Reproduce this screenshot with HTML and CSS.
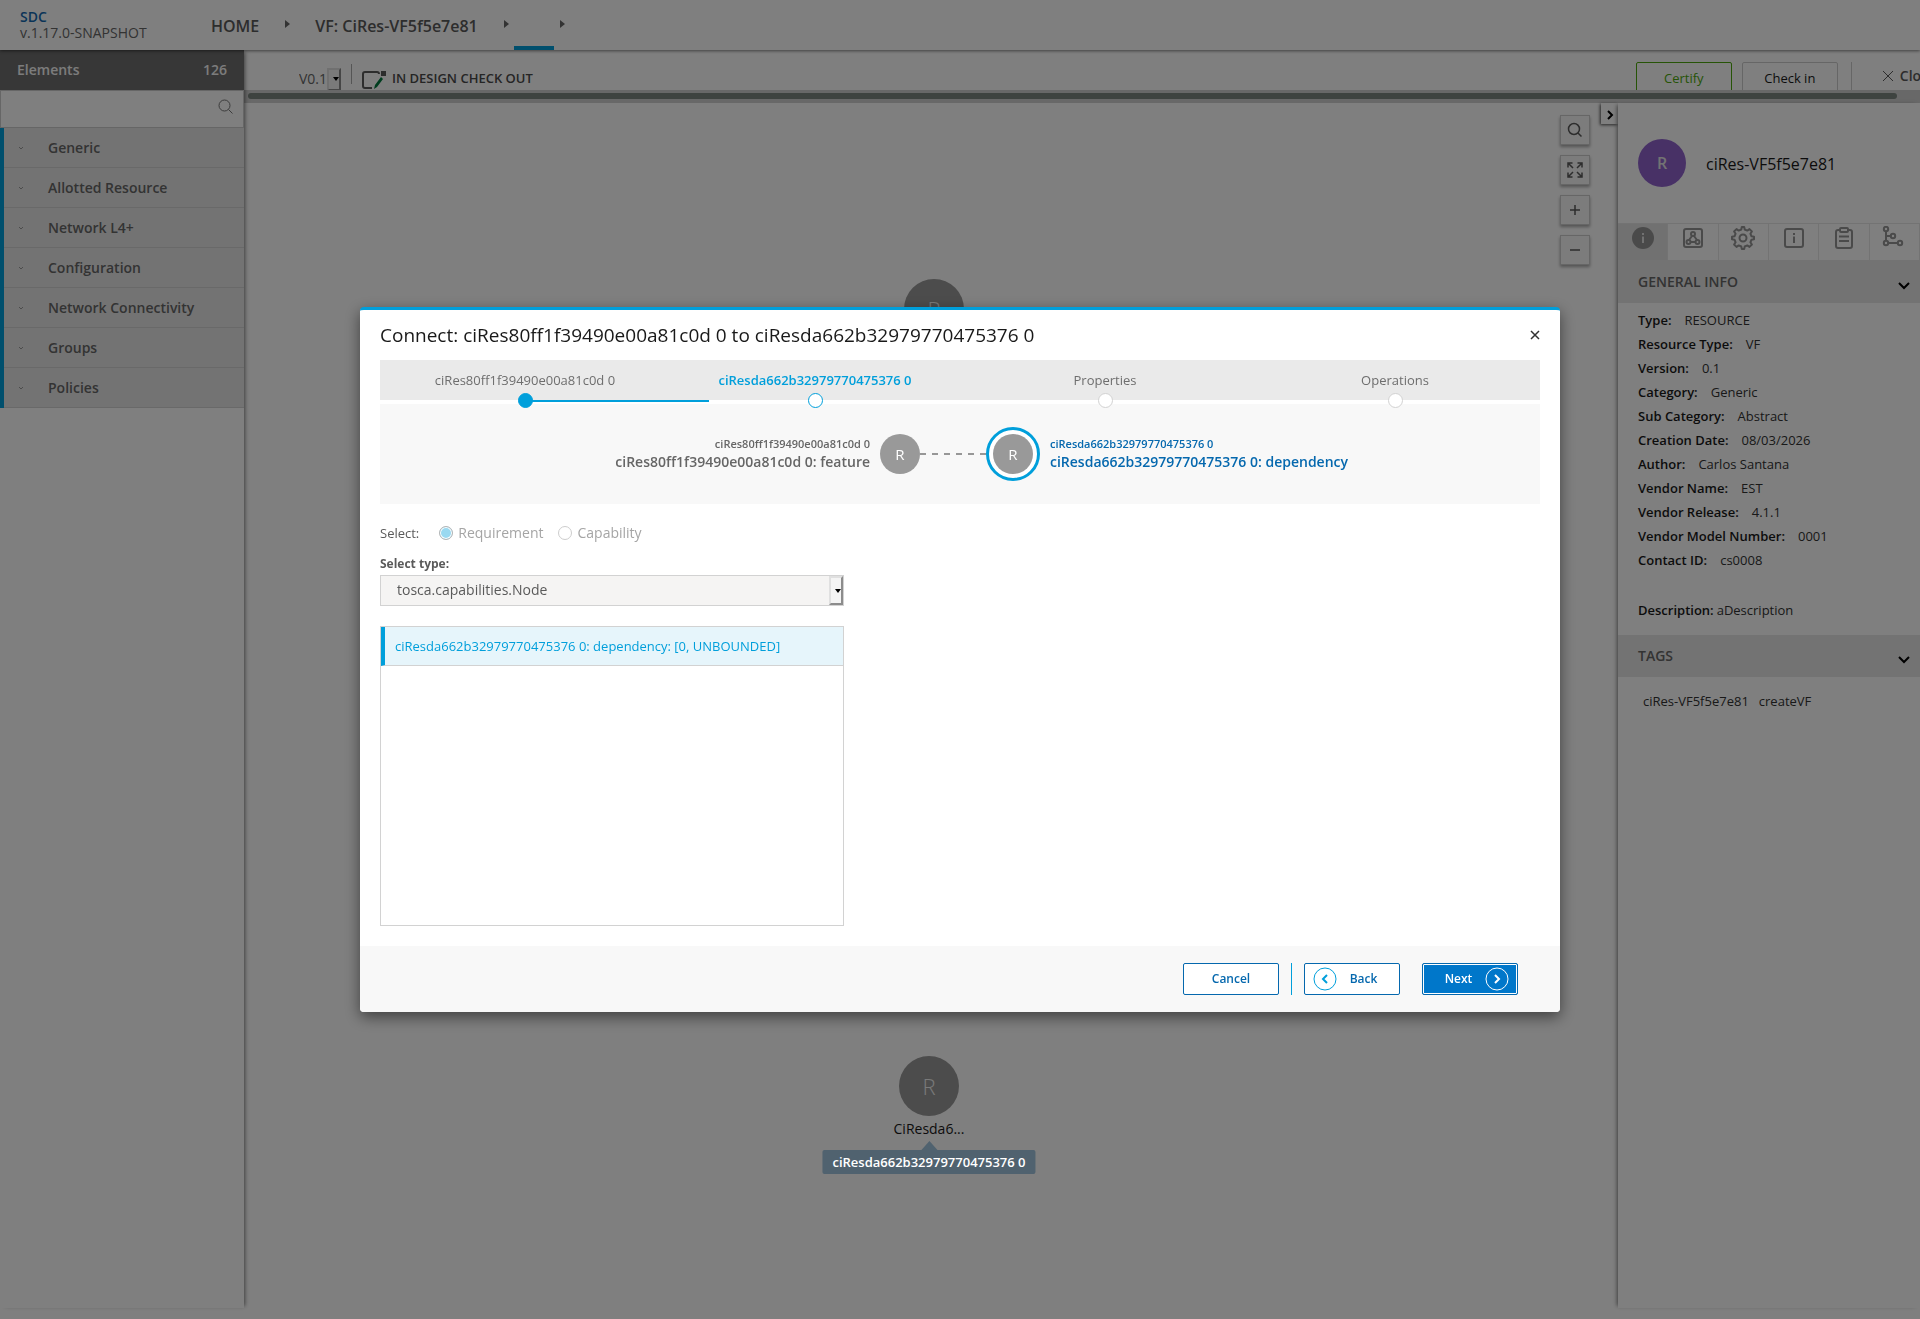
FILE: index.html
```
<!DOCTYPE html>
<html lang="en">
<head>
    <meta charset="utf-8">
    <title>SDC - Composition</title>
    <link rel="stylesheet" href="styles.css">
</head>
<body>

<!-- top navigation -->
<header class="top-nav">
    <div class="logo">
        <a href="#" class="logo-name">SDC</a>
        <span class="logo-version">v.1.17.0-SNAPSHOT</span>
    </div>
    <nav class="breadcrumbs">
        <a href="#">HOME</a>
        <i class="crumb-arrow"></i>
        <a href="#">VF: CiRes-VF5f5e7e81</a>
        <i class="crumb-arrow"></i>
        <a href="#" class="selected" aria-label="Composition"></a>
        <i class="crumb-arrow"></i>
    </nav>
</header>

<div class="workspace">
    <!-- palette -->
    <aside class="palette">
        <div class="palette-title"><span>Elements</span><span>126</span></div>
        <div class="palette-search">
            <input type="text" aria-label="Search elements">
            <svg width="16" height="16" viewBox="0 0 16 16"><circle cx="6.5" cy="6.5" r="5.5"/><path d="M10.5 10.5l4 4"/></svg>
        </div>
        <div class="palette-list">
            <button type="button"><svg width="6" height="4" viewBox="0 0 6 4"><path d="M1 1l2 2 2-2"/></svg>Generic</button>
            <button type="button"><svg width="6" height="4" viewBox="0 0 6 4"><path d="M1 1l2 2 2-2"/></svg>Allotted Resource</button>
            <button type="button"><svg width="6" height="4" viewBox="0 0 6 4"><path d="M1 1l2 2 2-2"/></svg>Network L4+</button>
            <button type="button"><svg width="6" height="4" viewBox="0 0 6 4"><path d="M1 1l2 2 2-2"/></svg>Configuration</button>
            <button type="button"><svg width="6" height="4" viewBox="0 0 6 4"><path d="M1 1l2 2 2-2"/></svg>Network Connectivity</button>
            <button type="button"><svg width="6" height="4" viewBox="0 0 6 4"><path d="M1 1l2 2 2-2"/></svg>Groups</button>
            <button type="button"><svg width="6" height="4" viewBox="0 0 6 4"><path d="M1 1l2 2 2-2"/></svg>Policies</button>
        </div>
    </aside>

    <main class="main">
        <div class="toolbar">
            <div class="toolbar-inner">
                <span class="select-box version">
                    <select aria-label="Version"><option>V0.1</option></select>
                </span>
                <span class="separator"></span>
                <svg class="status-icon" width="24" height="18" viewBox="0 0 24 18">
                    <path d="M17 3V3a2 2 0 0 0-2-2H3a2 2 0 0 0-2 2v12a2 2 0 0 0 2 2h7" fill="none" stroke="#5a5a5a" stroke-width="2"/>
                    <path d="M19 0h5v5h-5z" fill="#5a5a5a"/>
                    <path d="M12 18l1-4 6-8 2 2-6 8z" fill="#007a3e"/>
                </svg>
                <span class="status">IN DESIGN CHECK OUT</span>
                <div class="toolbar-actions">
                    <button type="button" class="tb-btn certify">Certify</button>
                    <button type="button" class="tb-btn">Check in</button>
                    <span class="separator"></span>
                    <a href="#" class="close-link">
                        <svg width="12" height="12" viewBox="0 0 12 12"><path d="M1 1l10 10M11 1L1 11"/></svg>Close
                    </a>
                </div>
            </div>
        </div>
        <div class="scrollbar"><div class="thumb"></div></div>

        <div class="composition">
            <div class="canvas">
                <div class="node node-source"><span class="circle">R</span></div>
                <div class="node node-target"><span class="circle">R</span><span class="label">CiResda6...</span></div>
                <div class="tooltip">ciResda662b32979770475376 0</div>

                <div class="canvas-tools">
                    <button type="button" aria-label="Search"><svg width="16" height="16" viewBox="0 0 16 16"><circle cx="7" cy="7" r="5.5"/><path d="M11 11l3.500 3.500"/></svg></button>
                    <button type="button" aria-label="Fit"><svg width="16" height="16" viewBox="0 0 16 16"><path d="M1 5.500V1h4.500M10.500 1H15v4.500M15 10.500V15h-4.500M5.500 15H1v-4.500M1.500 1.500L6 6M14.500 1.500L10 6M14.500 14.500L10 10M1.500 14.500L6 10"/></svg></button>
                    <button type="button" aria-label="Zoom in"><svg width="16" height="16" viewBox="0 0 16 16"><path d="M3 8h10M8 3v10"/></svg></button>
                    <button type="button" aria-label="Zoom out"><svg width="16" height="16" viewBox="0 0 16 16"><path d="M3 8h10"/></svg></button>
                </div>
                <button type="button" class="collapse" aria-label="Collapse"><svg width="8" height="12" viewBox="0 0 8 12"><path d="M2 2l4 4-4 4"/></svg></button>
            </div>

            <aside class="details">
                <div class="details-head">
                    <span class="avatar">R</span>
                    <span class="details-name">ciRes-VF5f5e7e81</span>
                </div>
                <div class="tabs">
                    <button type="button" class="active" aria-label="General info">
                        <svg width="24" height="24" viewBox="0 0 24 24"><circle cx="12" cy="12" r="11" fill="#959595" stroke="none"/><path d="M12 10.500V17M12 7v2" stroke="#e2e2e2" stroke-width="2"/></svg>
                    </button>
                    <button type="button" aria-label="Composition">
                        <svg width="24" height="24" viewBox="0 0 24 24"><rect x="3" y="3" width="18" height="18" rx="2"/><circle cx="12" cy="8" r="2"/><circle cx="7.500" cy="16" r="2"/><circle cx="16.500" cy="16" r="2"/><path d="M11 10l-3 4M13 10l3 4M9.500 16h5"/></svg>
                    </button>
                    <button type="button" aria-label="Settings">
                        <svg width="24" height="24" viewBox="0 0 24 24"><circle cx="12" cy="12" r="3.500"/><path d="M10.300 3.500L10.800 1h2.400l.5 2.500 2.600 1.100 2.200-1.500 2.400 2.400-1.500 2.200 1.100 2.600 2.500.5v2.400l-2.500.5-1.100 2.600 1.500 2.200-2.400 2.400-2.200-1.500-2.600 1.100-.5 2.500h-2.400l-.5-2.500-2.600-1.100-2.200 1.500-2.400-2.400 1.500-2.200-1.100-2.600L1 13.200v-2.400l2.500-.5 1.100-2.600-1.500-2.200 2.400-2.400 2.200 1.500z" stroke-linejoin="round"/></svg>
                    </button>
                    <button type="button" aria-label="Information">
                        <svg width="24" height="24" viewBox="0 0 24 24"><rect x="3" y="3" width="18" height="18" rx="2"/><path d="M12 10.500V17M12 7v2"/></svg>
                    </button>
                    <button type="button" aria-label="Requirements">
                        <svg width="24" height="24" viewBox="0 0 24 24"><path d="M8 4H6a2 2 0 0 0-2 2v14a2 2 0 0 0 2 2h12a2 2 0 0 0 2-2V6a2 2 0 0 0-2-2h-2"/><rect x="8" y="2" width="8" height="4" rx="1"/><path d="M7 10.500h10M7 15h10"/></svg>
                    </button>
                    <button type="button" aria-label="Relations">
                        <svg width="24" height="24" viewBox="0 0 24 24"><circle cx="4" cy="3" r="2.200"/><circle cx="4" cy="17" r="2.200"/><circle cx="11" cy="10" r="2.200"/><circle cx="18" cy="17" r="2.200"/><path d="M4 5v10M6 17h10M4 10h5"/></svg>
                    </button>
                </div>

                <h3 class="section-title">GENERAL INFO <svg width="12" height="8" viewBox="0 0 12 8"><path d="M1 1l5 5 5-5"/></svg></h3>
                <dl class="info">
                    <div><dt>Type:</dt><dd>RESOURCE</dd></div>
                    <div><dt>Resource Type:</dt><dd>VF</dd></div>
                    <div><dt>Version:</dt><dd>0.1</dd></div>
                    <div><dt>Category:</dt><dd>Generic</dd></div>
                    <div><dt>Sub Category:</dt><dd>Abstract</dd></div>
                    <div><dt>Creation Date:</dt><dd>08/03/2026</dd></div>
                    <div><dt>Author:</dt><dd>Carlos Santana</dd></div>
                    <div><dt>Vendor Name:</dt><dd>EST</dd></div>
                    <div><dt>Vendor Release:</dt><dd>4.1.1</dd></div>
                    <div><dt>Vendor Model Number:</dt><dd>0001</dd></div>
                    <div><dt>Contact ID:</dt><dd>cs0008</dd></div>
                    <div class="description"><dt>Description:</dt><dd>aDescription</dd></div>
                </dl>

                <h3 class="section-title">TAGS <svg width="12" height="8" viewBox="0 0 12 8"><path d="M1 1l5 5 5-5"/></svg></h3>
                <div class="tags"><span>ciRes-VF5f5e7e81</span><span>createVF</span></div>
            </aside>
        </div>
    </main>
</div>

<!-- connection wizard -->
<div class="overlay">
    <div class="modal" role="dialog" aria-labelledby="modal-title">
        <div class="modal-head">
            <h2 id="modal-title">Connect: ciRes80ff1f39490e00a81c0d 0 to ciResda662b32979770475376 0</h2>
            <button type="button" class="modal-close" aria-label="Close"><svg width="10" height="10" viewBox="0 0 10 10"><path d="M1 1l8 8M9 1L1 9"/></svg></button>
        </div>

        <div class="modal-body">
            <ol class="steps">
                <li class="done">ciRes80ff1f39490e00a81c0d 0</li>
                <li class="current">ciResda662b32979770475376 0</li>
                <li>Properties</li>
                <li>Operations</li>
            </ol>

            <div class="connection">
                <div class="side from">
                    <span class="side-name">ciRes80ff1f39490e00a81c0d 0</span>
                    <span class="side-cap">ciRes80ff1f39490e00a81c0d 0: feature</span>
                </div>
                <div class="link">
                    <span class="res">R</span>
                    <span class="dash"></span>
                    <span class="ring"><span class="res">R</span></span>
                </div>
                <div class="side to">
                    <span class="side-name">ciResda662b32979770475376 0</span>
                    <span class="side-cap">ciResda662b32979770475376 0: dependency</span>
                </div>
            </div>

            <div class="radios">
                <span class="radios-label">Select:</span>
                <label><input type="radio" name="kind" checked disabled>Requirement</label>
                <label><input type="radio" name="kind" disabled>Capability</label>
            </div>

            <div class="type-column">
                <label class="type-label" for="type">Select type:</label>
                <span class="select-box type">
                    <select id="type"><option>tosca.capabilities.Node</option></select>
                </span>
                <ul class="req-list">
                    <li class="selected">ciResda662b32979770475376 0: dependency: [0, UNBOUNDED]</li>
                </ul>
            </div>
        </div>

        <div class="modal-foot">
            <button type="button" class="btn">Cancel</button>
            <span class="foot-separator"></span>
            <button type="button" class="btn back"><svg width="24" height="24" viewBox="0 0 24 24"><circle cx="12" cy="12" r="11"/><path d="M14 8l-4 4 4 4" stroke-width="2"/></svg>Back</button>
            <button type="button" class="btn next">Next<svg width="24" height="24" viewBox="0 0 24 24"><circle cx="12" cy="12" r="11"/><path d="M10 8l4 4-4 4" stroke-width="2"/></svg></button>
        </div>
    </div>
</div>

</body>
</html>
```
FILE: styles.css
```
* { box-sizing: border-box; }
body {
    margin: 0;
    height: 100vh;
    display: flex;
    flex-direction: column;
    overflow: hidden;
    background: #fff;
    color: #191919;
    font: 13px/18px "Open Sans", sans-serif;
}
a { color: inherit; text-decoration: none; }
button, select, input { font: inherit; color: inherit; }
button { padding: 0; cursor: pointer; }
svg { fill: none; stroke: currentColor; flex: none; }
h2, h3, ol, ul, dl, dd { margin: 0; padding: 0; list-style: none; }

/* top navigation */
.top-nav {
    position: relative;
    z-index: 2;
    display: flex;
    height: 50px;
    flex: none;
    background: #fff;
    box-shadow: 0 1px 3px rgba(0,0,0,.5);
}
.logo {
    width: 211px;
    padding: 9px 0 0 20px;
    display: flex;
    flex-direction: column;
    font-size: 14px;
    line-height: 16px;
    color: #666;
}
.logo-name { color: #1469b0; font-weight: 600; }
.breadcrumbs { display: flex; align-items: center; font-size: 16px; font-weight: 600; color: #5a5a5a; }
.breadcrumbs a { padding-top: 2px; }
.crumb-arrow {
    margin: 0 25px 3px 26px;
    border: solid transparent;
    border-width: 4px 0 4px 5px;
    border-left-color: #666;
}
.breadcrumbs .selected { width: 40px; height: 50px; border-bottom: 4px solid #009fdb; margin: 0 -20px; }

.workspace { display: flex; flex: 1; min-height: 0; }

/* palette */
.palette { width: 244px; flex: none; margin-bottom: 11px; box-shadow: 3px 0 4px -2px rgba(0,0,0,.5); position: relative; z-index: 1; }
.palette-title {
    display: flex;
    justify-content: space-between;
    align-items: center;
    height: 40px;
    padding: 0 17px;
    background: #6e6e6e;
    color: #f8f8f8;
    font-size: 14px;
    font-weight: 600;
}
.palette-search { position: relative; height: 38px; }
.palette-search input { width: 100%; height: 100%; padding: 0 35px 0 10px; border: 1px solid #cdcdcd; background: #fff; }
.palette-search svg { position: absolute; right: 10px; top: 9px; color: #777; }
.palette-list { border-left: 4px solid #009fdb; }
.palette-list button {
    display: flex;
    align-items: center;
    gap: 24px;
    width: 100%;
    height: 40px;
    padding-left: 14px;
    border: 0;
    border-bottom: 1px solid #d2d2d2;
    background: #e6e6e6;
    color: #666;
    font-size: 14px;
    font-weight: 600;
}
.palette-list svg { color: #999; }

/* toolbar */
.main { flex: 1; min-width: 0; display: flex; flex-direction: column; }
.toolbar { height: 40px; overflow: hidden; }
.toolbar-inner { display: flex; align-items: flex-start; width: calc(100% + 16px); padding: 13px 0 0 55px; }
.select-box { position: relative; display: inline-block; }
.select-box select { appearance: none; width: 100%; height: 100%; border: 0; background: none; outline: 0; }
/* narrow outset drop-down handle */
.select-box::before {
    content: "";
    position: absolute;
    right: 0;
    top: 0;
    bottom: 0;
    width: 10px;
    border: 2px outset #e0e0e0;
    border-left-color: #e0e0e0;
    border-top-color: #e0e0e0;
    background: #f4f4f4;
    pointer-events: none;
}
.select-box::after {
    content: "";
    position: absolute;
    right: 2px;
    top: 50%;
    margin-top: -2px;
    border: solid transparent;
    border-width: 4px 3px 0;
    border-top-color: #000;
    pointer-events: none;
}
.version { width: 42px; height: 30px; margin-top: 1px; color: #666; font-size: 14px; }
.version::before { top: 4px; bottom: 3px; }
.version select { padding: 0; }
.separator { width: 1px; height: 20px; background: #aaa; }
.version + .separator { margin: 1px 10px 0; }
.status-icon { margin-top: 8px; stroke: none; }
.status { margin: 6px 0 0 6px; font-weight: 600; color: #4a4a4a; }
.toolbar-actions { display: flex; margin-left: auto; gap: 10px; }
.tb-btn {
    width: 96px;
    height: 32px;
    margin-top: -1px;
    border: 1px solid #cdcdcd;
    border-radius: 2px;
    background: #fff;
    color: #191919;
    font-weight: 500;
}
.certify { border-color: #4ca90c; color: #4ca90c; }
.toolbar-actions .separator { margin: -1px 20px 0 3px; height: 32px; background: #cdcdcd; }
.close-link { display: flex; align-items: center; gap: 6px; height: 26px; color: #5a5a5a; font-size: 14px; font-weight: 600; }
.scrollbar { height: 13px; padding: 3px 23px 4px 4px; background: #d0d0d0; flex: none; }
.thumb { height: 6px; border-radius: 3px; background: #7c8680; }

/* canvas */
.composition { flex: 1; display: flex; min-height: 0; }
.canvas { flex: 1; position: relative; background: #fff; }
.node { position: absolute; display: flex; flex-direction: column; align-items: center; width: 80px; transform: translateX(-50%); }
.node-source { left: 690px; top: 176px; }
.node-target { left: 685px; top: 953px; }
.circle {
    display: flex;
    align-items: center;
    justify-content: center;
    width: 60px;
    height: 60px;
    border-radius: 50%;
    background: #999;
    color: #f4f4f4;
    font-size: 22px;
    font-weight: 300;
}
.label { margin-top: 4px; font-size: 14px; }
.tooltip {
    position: absolute;
    z-index: 20;
    left: 685px;
    top: 1047px;
    transform: translateX(-50%);
    padding: 3px 10px;
    border-radius: 2px;
    background: #50626f;
    color: #fff;
    font-weight: 600;
    white-space: nowrap;
}
.tooltip::before {
    content: "";
    position: absolute;
    left: 50%;
    bottom: 100%;
    margin-left: -8px;
    border: solid transparent;
    border-width: 0 8px 9px;
    border-bottom-color: #50626f;
}
.canvas-tools { position: absolute; right: 28px; top: 12px; display: flex; flex-direction: column; gap: 10px; }
.canvas-tools button {
    display: flex;
    align-items: center;
    justify-content: center;
    width: 30px;
    height: 30px;
    border: 1px solid #cdcdcd;
    background: #f8f8f8;
    color: #5a5a5a;
    box-shadow: 0 2px 3px rgba(0,0,0,.35);
}
.canvas-tools svg { stroke-width: 1.5; }
.collapse {
    position: absolute;
    right: 0;
    top: 0;
    width: 17px;
    height: 21px;
    border: 0;
    background: #fff;
    box-shadow: -1px 1px 3px rgba(0,0,0,.7);
}
.collapse svg { stroke: #000; stroke-width: 2; vertical-align: middle; }

/* details panel */
.details { width: 302px; flex: none; margin-bottom: 11px; background: #fff; box-shadow: -3px 0 4px -2px rgba(0,0,0,.5); position: relative; }
.details-head { display: flex; align-items: center; gap: 20px; height: 120px; padding: 0 20px; }
.avatar {
    display: flex;
    align-items: center;
    justify-content: center;
    width: 48px;
    height: 48px;
    border-radius: 50%;
    background: #9063cd;
    color: #e6e6e6;
    font-size: 16px;
    font-weight: 600;
}
.details-name { padding-top: 2px; font-size: 16px; }
.tabs { display: flex; height: 38px; border: solid #e6e6e6; border-width: 1px 0; }
.tabs button { flex: 1; padding-top: 2px; border: 0; border-right: 1px solid #e6e6e6; background: #fff; color: #959595; display: flex; justify-content: center; }
.tabs .active { background: #e2e2e2; }
.tabs svg { stroke-width: 2; }
.section-title {
    display: flex;
    align-items: center;
    justify-content: space-between;
    height: 42px;
    padding: 0 10px 0 20px;
    background: #e6e6e6;
    color: #666;
    font-size: 14px;
    font-weight: 600;
}
.section-title svg { margin-top: 8px; stroke: #000; stroke-width: 2; }
.info { padding: 5px 20px 13px; }
.info div { display: flex; gap: 13px; line-height: 24px; }
.info dt { font-weight: 600; }
.info dd { color: #323232; }
.info .description { gap: 3px; margin-top: 26px; }
.tags { display: flex; gap: 10px; padding: 15px 25px; color: #323232; }

/* modal */
.overlay {
    position: fixed;
    inset: 0;
    z-index: 10;
    display: flex;
    align-items: center;
    justify-content: center;
    background: rgba(0,0,0,.5);
}
.modal {
    width: 1200px;
    max-width: 100%;
    border-top: 3px solid #009fdb;
    border-radius: 4px;
    background: #fff;
    box-shadow: 0 5px 15px rgba(0,0,0,.5);
}
.modal-head { display: flex; align-items: center; justify-content: space-between; height: 50px; padding: 0 20px; }
.modal-head h2 { font-size: 19px; font-weight: 400; }
.modal-close { width: 10px; height: 18px; border: 0; background: none; color: #323232; }
.modal-close svg { display: block; margin: auto; stroke-width: 1.5; }
.modal-body { padding: 0 20px 20px; }

.steps { display: flex; height: 44px; border-bottom: 4px solid #fff; background: #eaeaea; }
.steps li { position: relative; flex: 1; padding-top: 11px; text-align: center; color: #6e6e6e; }
.steps li::before {
    content: "";
    position: absolute;
    z-index: 1;
    left: 50%;
    bottom: -8px;
    width: 13px;
    height: 13px;
    margin-left: -7px;
    border: 1px solid #d2d2d2;
    border-radius: 50%;
    background: #fff;
}
.steps .done::before { background: #009fdb; border-color: #009fdb; }
.steps .done::after {
    content: "";
    position: absolute;
    left: 50%;
    bottom: -2px;
    width: 184px;
    height: 2px;
    background: #009fdb;
}
.steps .current { color: #009fdb; font-weight: 600; }
.steps .current::before { border-color: #009fdb; }

.connection { display: grid; grid-template-columns: 1fr 160px 1fr; gap: 10px; align-items: center; height: 100px; background: #f8f8f8; }
.side { display: flex; flex-direction: column; padding-bottom: 2px; }
.side-name { font-size: 11px; font-weight: 600; }
.side-cap { font-size: 14px; font-weight: 600; }
.from { text-align: right; color: #666; }
.to { color: #0568ae; }
.link { display: flex; align-items: center; }
.res {
    display: flex;
    align-items: center;
    justify-content: center;
    width: 40px;
    height: 40px;
    border-radius: 50%;
    background: #999;
    color: #fff;
    font-size: 15px;
}
.dash { flex: 1; height: 2px; background: repeating-linear-gradient(90deg, #979797 0 6px, transparent 6px 12px); }
.ring { padding: 4px; border: 3px solid #009fdb; border-radius: 50%; background: #fff; }

.radios { display: flex; align-items: center; margin-top: 20px; height: 18px; color: #5a5a5a; }
.radios-label { margin-right: 20px; }
.radios label { display: flex; align-items: center; gap: 5px; margin-right: 15px; font-size: 14px; color: #a5a5a5; }
.radios input {
    appearance: none;
    width: 14px;
    height: 14px;
    margin: 0;
    border: 1px solid #cdcdcd;
    border-radius: 50%;
    background: #fff;
}
.radios input:checked { background: #99d9f1; border-color: #b5b5b5; box-shadow: inset 0 0 0 1px #fff; }

.type-column { display: flex; flex-direction: column; width: 40%; margin-top: 13px; }
.type-label { font-weight: 700; font-size: 12px; color: #5a5a5a; }
.type { height: 31px; margin: 2px 0 20px; border: 1px solid #d2d2d2; background: #f5f4f3; color: #5a5a5a; font-size: 14px; }
.type select { padding: 0 16px 2px; }
.req-list { height: 300px; border: 1px solid #d2d2d2; }
.req-list li { padding: 10px; border-left: 4px solid transparent; border-bottom: 1px solid #d2d2d2; }
.req-list .selected { border-left-color: #009fdb; background: #e6f5fb; color: #009fdb; }

.modal-foot {
    display: flex;
    align-items: center;
    justify-content: flex-end;
    height: 66px;
    padding: 0 42px;
    border-radius: 0 0 4px 4px;
    background: #f8f8f8;
}
.btn {
    display: flex;
    align-items: center;
    justify-content: center;
    gap: 13px;
    width: 96px;
    height: 32px;
    border: 1px solid #0568ae;
    border-radius: 2px;
    background: #fff;
    color: #0568ae;
    font-size: 12px;
    font-weight: 600;
}
.foot-separator { width: 1px; height: 32px; margin: 0 12px; background: #009fdb; }
.back { padding-right: 14px; margin-right: 22px; }
.back svg { color: #009fdb; }
.next { padding-left: 14px; background: #0077ca; color: #fff; box-shadow: inset 0 0 0 1px #fff; }
```
